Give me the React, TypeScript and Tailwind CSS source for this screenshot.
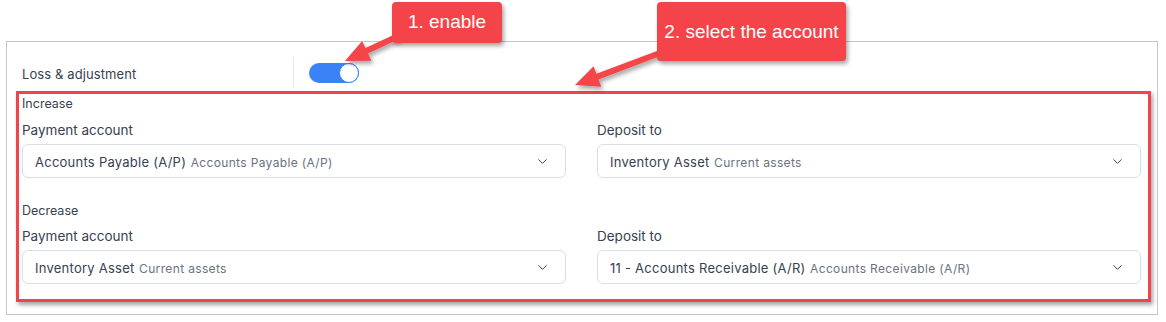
import { ChevronDown } from 'lucide-react';

const RED = '#f4444a';

// arrow polygon from tail to tip
function arrowPoints(tx: number, ty: number, hx: number, hy: number, headLen = 24, headHalf = 11, shaftHalf = 3) {
  const dx = hx - tx;
  const dy = hy - ty;
  const len = Math.hypot(dx, dy);
  const ux = dx / len;
  const uy = dy / len;
  const px = -uy;
  const py = ux;
  const bx = hx - ux * headLen;
  const by = hy - uy * headLen;
  const pts = [
    [tx + px * shaftHalf, ty + py * shaftHalf],
    [bx + px * shaftHalf, by + py * shaftHalf],
    [bx + px * headHalf, by + py * headHalf],
    [hx, hy],
    [bx - px * headHalf, by - py * headHalf],
    [bx - px * shaftHalf, by - py * shaftHalf],
    [tx - px * shaftHalf, ty - py * shaftHalf],
  ];
  return pts.map((p) => `${p[0].toFixed(1)},${p[1].toFixed(1)}`).join(' ');
}

interface SelectProps {
  main: string;
  sub: string;
}

function Select({ main, sub }: SelectProps) {
  return (
    <div className="flex items-center justify-between h-[34px] rounded-md border border-[#d9dee5] pl-[12px] pr-[15px] bg-white">
      <span className="truncate">
        <span className="text-[13px] tracking-[0.25px] text-[#374151]">{main}</span>{' '}
        <span className="text-[12px] tracking-[0.35px] text-[#6b7280]">{sub}</span>
      </span>
      <ChevronDown size={15} strokeWidth={1.6} className="text-[#374151]" />
    </div>
  );
}

function Field({ label, main, sub }: { label: string; main: string; sub: string }) {
  return (
    <div>
      <div className="h-[18px] leading-[18px] text-[13.5px] text-[#374151] mb-[5px]">{label}</div>
      <Select main={main} sub={sub} />
    </div>
  );
}

export default function App() {
  return (
    <div className="relative w-[1166px] h-[322px] bg-white overflow-hidden" style={{ fontFamily: 'Inter, "Noto Sans", sans-serif' }}>
      {/* panel */}
      <div className="ml-[6px] mt-[41px] w-[1152px] h-[274px] border border-[#c6c6c6] pt-[15px]">
        <div className="flex items-center h-[30px] pl-[15px]">
          <div className="w-[271px] pt-[5px] text-[13px] tracking-[0.1px] text-[#374151]">Loss &amp; adjustment</div>
          <div className="w-px h-[30px] bg-[#e5e7eb]" />
          <div className="ml-[15px] mt-[1px] w-[50px] h-[20px] rounded-full bg-[#3b82f6] flex justify-end">
            <div className="w-[20px] h-[20px] rounded-full bg-white border-[1.5px] border-[#3b82f6]" />
          </div>
        </div>

        {/* highlighted settings */}
        <div className="mt-[4px] ml-[9px] w-[1135px] border-[3px] border-[#f0434a] shadow-[2px_3px_4px_rgba(0,0,0,0.35)] pl-[3px] pr-[7px] pb-[15px]">
          <div className="h-[18px] leading-[18px] pt-[1px] text-[12.5px] text-[#374151]">Increase</div>
          <div className="grid grid-cols-2 gap-x-[31px] mt-[9px]">
            <Field label="Payment account" main="Accounts Payable (A/P)" sub="Accounts Payable (A/P)" />
            <Field label="Deposit to" main="Inventory Asset" sub="Current assets" />
          </div>
          <div className="h-[18px] leading-[18px] pt-[1px] text-[12.5px] text-[#374151] mt-[23px]">Decrease</div>
          <div className="grid grid-cols-2 gap-x-[31px] mt-[8px]">
            <Field label="Payment account" main="Inventory Asset" sub="Current assets" />
            <Field label="Deposit to" main="11 - Accounts Receivable (A/R)" sub="Accounts Receivable (A/R)" />
          </div>
        </div>
      </div>

      {/* annotation arrows */}
      <svg className="absolute left-0 top-0 pointer-events-none" width="1166" height="322">
        <defs>
          <filter id="sh" x="-20%" y="-20%" width="140%" height="140%">
            <feDropShadow dx="2" dy="3" stdDeviation="2" floodColor="#000" floodOpacity="0.35" />
          </filter>
        </defs>
        <polygon points={arrowPoints(405, 33, 345, 61)} fill={RED} filter="url(#sh)" />
        <polygon points={arrowPoints(668, 50, 575, 85)} fill={RED} filter="url(#sh)" />
      </svg>

      {/* callouts */}
      <div
        className="absolute left-[392px] top-[2px] w-[110px] h-[41px] rounded-[4px] bg-[#f4444a] shadow-[2px_3px_4px_rgba(0,0,0,0.35)] flex items-center justify-center text-white text-[19px]"
        style={{ fontFamily: '"Liberation Sans", Arial, sans-serif' }}
      >
        1. enable
      </div>
      <div
        className="absolute left-[657px] top-[2px] w-[189px] h-[59px] rounded-[4px] bg-[#f4444a] shadow-[2px_3px_4px_rgba(0,0,0,0.35)] flex items-center justify-center text-white text-[19px] pt-[1px]"
        style={{ fontFamily: '"Liberation Sans", Arial, sans-serif' }}
      >
        2. select the account
      </div>
    </div>
  );
}
